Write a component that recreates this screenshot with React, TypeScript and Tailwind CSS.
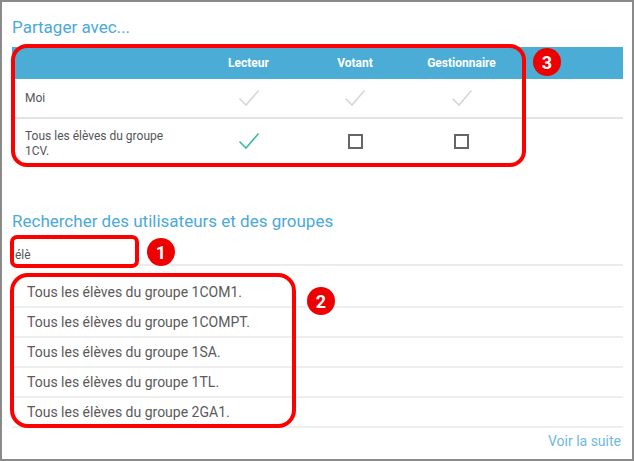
import React from "react";

const groups = ["1COM1", "1COMPT", "1SA", "1TL", "2GA1"];

const Check = ({ color }: { color: string }) => (
  <svg width="22" height="18" viewBox="0 0 22 18" fill="none">
    <polyline points="1.5,9.5 8,16 20.5,1.5" stroke={color} strokeWidth="1.6" />
  </svg>
);

const Box = () => <div className="w-[15px] h-[15px] border-2 border-[#666]" />;

const Badge = ({ n, className }: { n: string; className: string }) => (
  <div
    className={
      "absolute w-[28px] h-[28px] rounded-full bg-[#ee0000] text-white font-bold text-[18px] flex items-center justify-center " +
      className
    }
  >
    {n}
  </div>
);

export default function App() {
  return (
    <div
      className="relative w-[634px] h-[461px] border-2 border-[#8a8a8a] bg-white overflow-hidden"
      style={{ fontFamily: "Roboto, 'Liberation Sans', sans-serif" }}
    >
      <div className="px-[10px]">
        <h2 className="pt-[13px] h-[45px] text-[17px] text-[#4aa9d9]">Partager avec...</h2>

        <div className="w-[611px]">
          <div className="grid grid-cols-[183px_107px_106px_107px_1fr] h-[32px] bg-[#4badd6] text-white font-bold text-[12px] items-center">
            <div />
            <div className="text-center">Lecteur</div>
            <div className="text-center">Votant</div>
            <div className="text-center">Gestionnaire</div>
            <div />
          </div>
          <div className="grid grid-cols-[183px_107px_106px_107px_1fr] h-[40px] border-b-2 border-[#e4e4e4] items-center text-[12px] text-[#555]">
            <div className="pl-[13px]">Moi</div>
            <div className="flex justify-center">
              <Check color="#d6d6d6" />
            </div>
            <div className="flex justify-center">
              <Check color="#d6d6d6" />
            </div>
            <div className="flex justify-center">
              <Check color="#d6d6d6" />
            </div>
            <div />
          </div>
          <div className="grid grid-cols-[183px_107px_106px_107px_1fr] h-[44px] items-center text-[12px] text-[#555]">
            <div className="pl-[13px] pt-[5px] leading-[15px]">
              Tous les élèves du groupe
              <br />
              1CV.
            </div>
            <div className="flex justify-center">
              <Check color="#3dbba0" />
            </div>
            <div className="flex justify-center">
              <Box />
            </div>
            <div className="flex justify-center">
              <Box />
            </div>
            <div />
          </div>
        </div>

        <h2 className="mt-[48px] text-[17px] text-[#4aa9d9] leading-[20px]">
          Rechercher des utilisateurs et des groupes
        </h2>

        <div className="w-[611px] h-[35px] border-b-2 border-[#ececec] flex items-end pb-0 pl-[3px] text-[12px] text-[#555]">
          élè
        </div>

        <div className="w-[611px] pt-[12px]">
          {groups.map((g) => (
            <div
              key={g}
              className="h-[30px] border-b-2 border-[#eeeeee] flex items-center pl-[15px] text-[14px] text-[#5a5a5a]"
            >
              Tous les élèves du groupe {g}.
            </div>
          ))}
        </div>

        <div className="w-[609px] mt-[3px] leading-[20px] text-right text-[14px] text-[#6fb9e2]">Voir la suite</div>
      </div>

      <div className="absolute left-[9px] top-[42px] w-[515px] h-[123px] border-4 border-[#f00] rounded-[16px]" />
      <Badge n="3" className="left-[531px] top-[46px]" />

      <div className="absolute left-[8px] top-[233px] w-[129px] h-[33px] border-4 border-[#f00] rounded-[7px]" />
      <Badge n="1" className="left-[145px] top-[236px]" />

      <div className="absolute left-[8px] top-[271px] w-[286px] h-[155px] border-4 border-[#f00] rounded-[18px]" />
      <Badge n="2" className="left-[305px] top-[285px]" />
    </div>
  );
}
